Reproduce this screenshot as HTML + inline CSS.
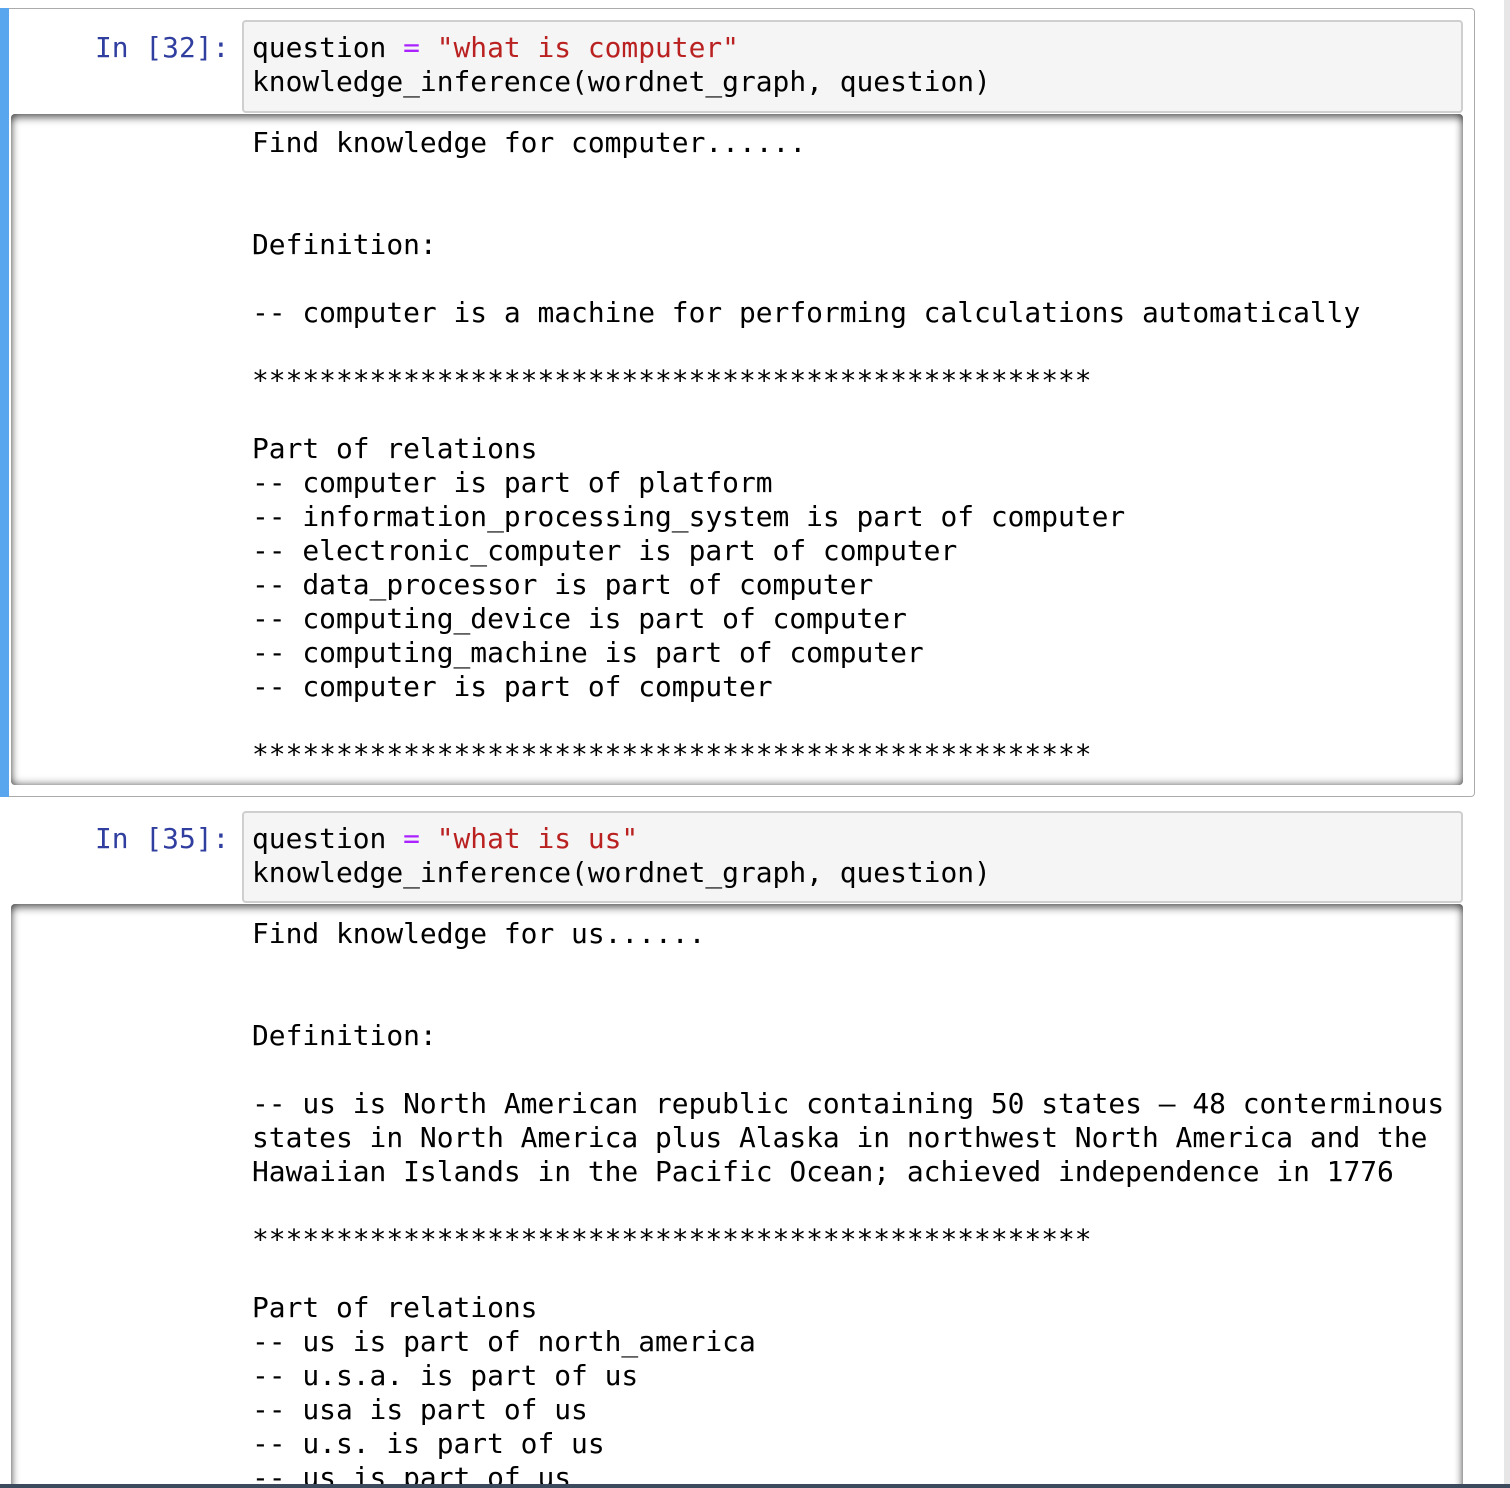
<!DOCTYPE html>
<html style="width:1510px;height:1488px;overflow:hidden"><head><meta charset="utf-8"><style>
*{margin:0;padding:0;box-sizing:border-box}
body{width:1510px;height:1488px;background:#fff;position:relative;overflow:hidden;font-family:"DejaVu Sans Mono","Liberation Mono",monospace;font-size:28px;color:#000}
.abs{position:absolute}
pre{font-family:"DejaVu Sans Mono","Liberation Mono",monospace;font-size:27.9px;line-height:34px;white-space:pre;margin:0}
.sel{left:0;top:8px;width:1475px;height:789px;border:1px solid #ababab;border-left:none;border-radius:0 4px 4px 0}
.bar{left:0;top:8px;width:9px;height:789px;background:#5aa6ee}
.inp{background:#f5f5f5;border:2px solid #cfcfcf;border-radius:4px;left:242px;width:1221px}
.out{left:11px;width:1452px;background:#fff;border-radius:4px;box-shadow:inset 0 6px 8px -2px rgba(0,0,0,.55),inset 6px 0 8px -4px rgba(0,0,0,.35),inset -6px 0 8px -4px rgba(0,0,0,.35),inset 0 -6px 8px -4px rgba(0,0,0,.35);overflow:hidden}
.prompt{color:#303f9f;left:95px}
.p{color:#aa22ff}.s{color:#ba2121}
</style></head><body>
<div class="abs" style="right:0;top:0;width:6px;height:1488px;background:#e6e6e6"></div>
<div class="abs sel"></div>
<div class="abs bar"></div>
<pre class="abs prompt" style="top:31px">In [32]:</pre>
<div class="abs inp" style="top:20px;height:93px"></div>
<pre class="abs" style="left:252px;top:31px">question <span class="p">=</span> <span class="s">"what is computer"</span>
knowledge_inference(wordnet_graph, question)</pre>
<div class="abs out" style="top:114px;height:671px"></div>
<pre class="abs" style="left:252px;top:126px">Find knowledge for computer......


Definition:

-- computer is a machine for performing calculations automatically

**************************************************

Part of relations
-- computer is part of platform
-- information_processing_system is part of computer
-- electronic_computer is part of computer
-- data_processor is part of computer
-- computing_device is part of computer
-- computing_machine is part of computer
-- computer is part of computer

**************************************************</pre>

<pre class="abs prompt" style="top:822px">In [35]:</pre>
<div class="abs inp" style="top:811px;height:92px"></div>
<pre class="abs" style="left:252px;top:822px">question <span class="p">=</span> <span class="s">"what is us"</span>
knowledge_inference(wordnet_graph, question)</pre>
<div class="abs out" style="top:904px;height:600px"></div>
<pre class="abs" style="left:252px;top:917px;height:567px;overflow:hidden">Find knowledge for us......


Definition:

-- us is North American republic containing 50 states – 48 conterminous
states in North America plus Alaska in northwest North America and the
Hawaiian Islands in the Pacific Ocean; achieved independence in 1776

**************************************************

Part of relations
-- us is part of north_america
-- u.s.a. is part of us
-- usa is part of us
-- u.s. is part of us
-- us is part of us</pre>
<div class="abs" style="left:0;top:1484px;width:1510px;height:4px;background:#3c4a5e"></div>
</body></html>
